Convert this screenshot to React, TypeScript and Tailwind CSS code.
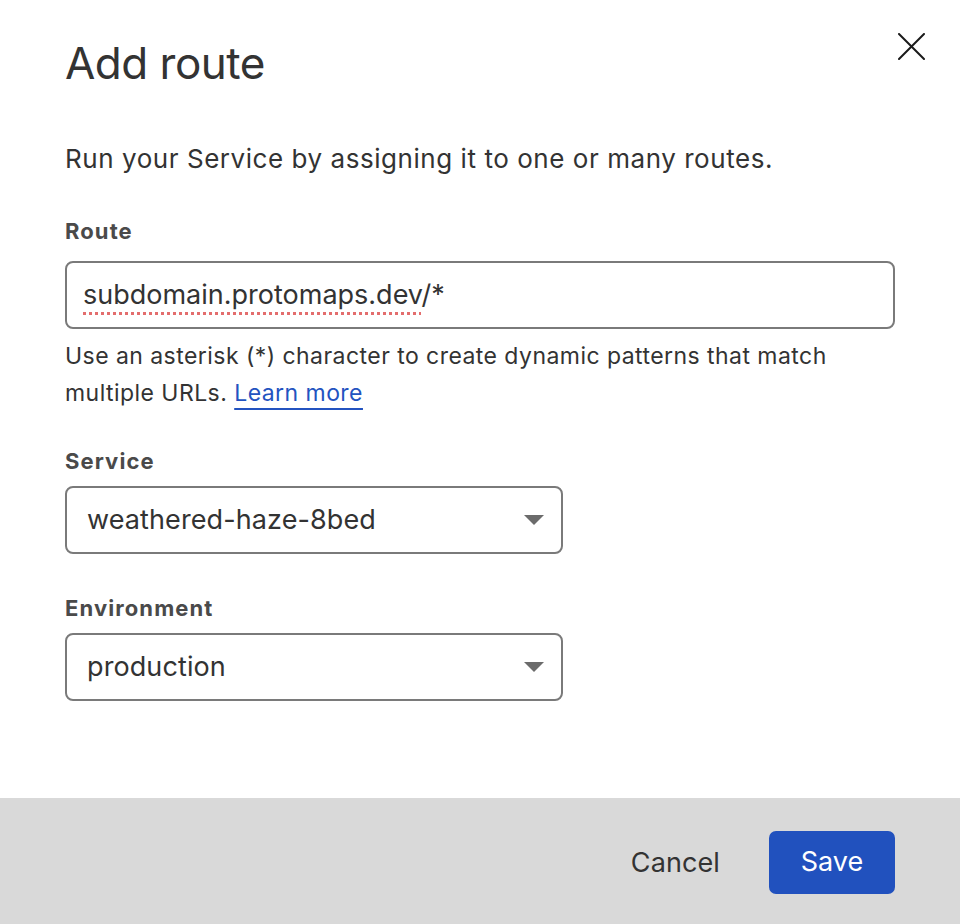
import React from 'react';

const AddRouteModal: React.FC = () => {
  return (
    <div className="w-[960px] h-[924px] flex flex-col bg-white font-['Inter',sans-serif] text-[#333]">
      {/* Body */}
      <div className="flex-1 pl-[65px] pr-[35px]">
        {/* Header */}
        <div className="flex items-start justify-between pt-[33px]">
          <h1 className="text-[44px] leading-[60px] font-normal tracking-[-0.5px] text-[#333]">Add route</h1>
          <button className="w-[27px] h-[27px] flex items-center justify-center text-[#1a1a1a]" aria-label="Close">
            <svg width="27" height="27" viewBox="0 0 27 27" fill="none" stroke="currentColor" strokeWidth="2" strokeLinecap="round">
              <path d="M1 1 L26 26 M26 1 L1 26" />
            </svg>
          </button>
        </div>

        <div className="pr-[30px]">
          <p className="mt-[50px] text-[26px] leading-[32px] tracking-[0.55px]">Run your Service by assigning it to one or many routes.</p>

          {/* Route */}
          <label className="block mt-[42px] text-[22px] leading-[28px] font-bold tracking-[1.1px] text-[#4a4a4a]">Route</label>
          <div className="mt-[16px] h-[68px] flex items-center px-[16px] border-2 border-[#7a7a7a] rounded-[8px]">
            <span className="text-[27px] tracking-[0px]">
              <span className="underline decoration-dotted decoration-[#e36d6d] decoration-[2.5px] underline-offset-[8px]">subdomain.protomaps.dev</span>/*
            </span>
          </div>
          <p className="mt-[9px] w-[800px] text-[23px] leading-[37px] tracking-[0.45px]">
            Use an asterisk (*) character to create dynamic patterns that match multiple URLs.{' '}
            <a href="#" className="text-[#2353c0] underline decoration-[#2353c0] underline-offset-[7px] decoration-[1.5px]">Learn more</a>
          </p>

          {/* Service */}
          <label className="block mt-[35px] text-[22px] leading-[28px] font-bold tracking-[1.1px] text-[#4a4a4a]">Service</label>
          <Select value="weathered-haze-8bed" />

          {/* Environment */}
          <label className="block mt-[40px] text-[22px] leading-[28px] font-bold tracking-[1.1px] text-[#4a4a4a]">Environment</label>
          <Select value="production" />
        </div>
      </div>

      {/* Footer */}
      <div className="h-[126px] bg-[#d9d9d9] flex items-center justify-end pr-[65px]">
        <button className="text-[27px] tracking-[0.1px] text-[#333] mr-[49px] mt-[4px]">Cancel</button>
        <button className="w-[126px] h-[63px] rounded-[7px] bg-[#2151be] text-white text-[27px] mt-[2px]">Save</button>
      </div>
    </div>
  );
};

const Select: React.FC<{ value: string }> = ({ value }) => (
  <div className="mt-[11px] w-[498px] h-[68px] flex items-center justify-between pl-[20px] pr-[17px] border-2 border-[#7a7a7a] rounded-[8px]">
    <span className="text-[27px] tracking-[0.1px]">{value}</span>
    <svg width="20" height="10" viewBox="0 0 20 10">
      <path d="M0 0 H20 L10 10 Z" fill="#6b6b6b" />
    </svg>
  </div>
);

export default function App() {
  return <AddRouteModal />;
}
